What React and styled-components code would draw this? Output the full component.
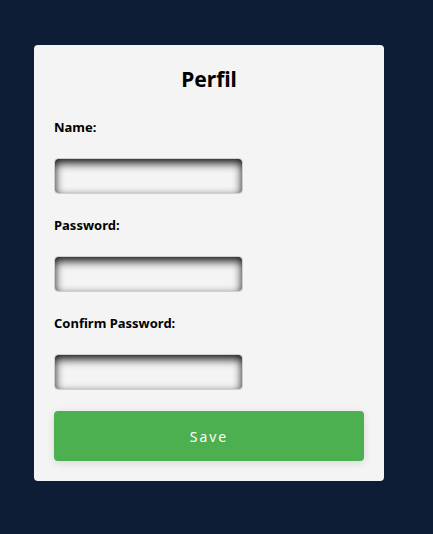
import React, { useState } from 'react';
import styled, { createGlobalStyle } from 'styled-components';

const GlobalStyle = createGlobalStyle`
  html, body {
    margin: 0;
    padding: 0;
    background-color: #0c1d35;
    font-family: "Noto Sans", "DejaVu Sans", sans-serif;
  }
`;

const Page = styled.div`
  min-height: 534px;
  padding: 45px 0 0 34px;
  box-sizing: border-box;
`;

const Card = styled.div`
  width: 350px;
  box-sizing: border-box;
  padding: 21px 20px 20px;
  background-color: #f4f4f4;
  border-radius: 4px;
`;

const Title = styled.h2`
  margin: 0 0 26px;
  font-size: 21px;
  line-height: 27px;
  font-weight: 700;
  text-align: center;
  color: #000;
`;

const Form = styled.form`
  display: flex;
  flex-direction: column;
  gap: 23px;
`;

const Field = styled.div`
  display: flex;
  flex-direction: column;
  align-items: flex-start;
`;

const Label = styled.label`
  margin-bottom: 22px;
  font-size: 13px;
  line-height: 17px;
  font-weight: 700;
  color: #000;
`;

const Input = styled.input`
  width: 189px;
  height: 36px;
  box-sizing: border-box;
  border: 1px solid #cfcfcf;
  border-radius: 4px;
  background-color: #f4f4f4;
  box-shadow: inset 0 4px 10px rgba(0, 0, 0, 0.95);
  outline: none;
  padding: 0 10px;
  font-family: inherit;
`;

const SaveButton = styled.button`
  height: 50px;
  width: 100%;
  margin-top: -2px;
  border: none;
  border-radius: 4px;
  background-color: #4caf50;
  color: #fff;
  font-family: inherit;
  font-size: 14px;
  letter-spacing: 2px;
  box-shadow: 0 2px 8px rgba(0, 0, 0, 0.12);
  cursor: pointer;
`;

const fields = [
  { id: 'name', label: 'Name:', type: 'text' },
  { id: 'password', label: 'Password:', type: 'password' },
  { id: 'confirm', label: 'Confirm Password:', type: 'password' },
];

const App = () => {
  const [values, setValues] = useState({ name: '', password: '', confirm: '' });

  const handleChange = (e) => {
    const { name, value } = e.target;
    setValues(prev => ({ ...prev, [name]: value }));
  };

  return (
    <>
      <GlobalStyle />
      <Page>
        <Card>
          <Title>Perfil</Title>
          <Form onSubmit={(e) => e.preventDefault()}>
            {fields.map(field => (
              <Field key={field.id}>
                <Label htmlFor={field.id}>{field.label}</Label>
                <Input
                  id={field.id}
                  name={field.id}
                  type={field.type}
                  value={values[field.id]}
                  onChange={handleChange}
                />
              </Field>
            ))}
            <SaveButton type="submit">Save</SaveButton>
          </Form>
        </Card>
      </Page>
    </>
  );
};

export default App;
